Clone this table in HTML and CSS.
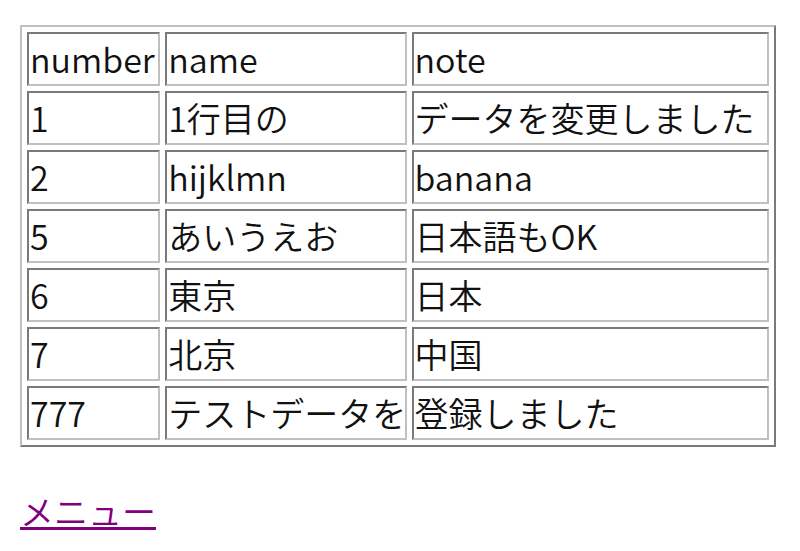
FILE: index.html
```html
<!DOCTYPE html>
<html lang="ja">
<head>
<meta charset="utf-8">
<link rel="stylesheet" href="styles.css">
</head>
<body>
<table class="data">
  <colgroup>
    <col class="c1"><col class="c2"><col class="c3">
  </colgroup>
  <tr><td>number</td><td>name</td><td>note</td></tr>
  <tr><td>1</td><td>1行目の</td><td>データを変更しました</td></tr>
  <tr><td>2</td><td>hijklmn</td><td>banana</td></tr>
  <tr><td>5</td><td>あいうえお</td><td>日本語もOK</td></tr>
  <tr><td>6</td><td>東京</td><td>日本</td></tr>
  <tr><td>7</td><td>北京</td><td>中国</td></tr>
  <tr><td>777</td><td>テストデータを</td><td>登録しました</td></tr>
</table>
<p class="menu"><a href="#" class="menu-link">メニュー</a></p>
</body>
</html>
```

FILE: styles.css
```css
html, body {
  background: #ffffff;
}
body {
  margin: 25px 0 0 20px;
  font-family: "Noto Sans CJK JP", "Noto Sans", sans-serif;
  font-size: 34px;
  color: #111;
}
.data {
  table-layout: fixed;
  width: 756px;
  border-collapse: separate;
  border-spacing: 5px;
  border-style: solid;
  border-width: 2px;
  border-color: #c0c0c0 #7a7a7a #7a7a7a #c0c0c0;
}
.c1 { width: 133px; }
.c2 { width: 241px; }
.c3 { width: 357px; }
.data td {
  height: 54px;
  box-sizing: border-box;
  padding: 0 0 0 1px;
  border-style: solid;
  border-width: 2px;
  border-color: #7a7a7a #c0c0c0 #c0c0c0 #7a7a7a;
  white-space: nowrap;
  overflow: visible;
  vertical-align: middle;
  line-height: 48px;
  font-weight: 350;
}
.menu {
  margin: 40px 0 0 0;
  line-height: 48px;
}
.menu-link {
  color: #800080;
  text-decoration: underline;
  font-weight: 350;
}
```
